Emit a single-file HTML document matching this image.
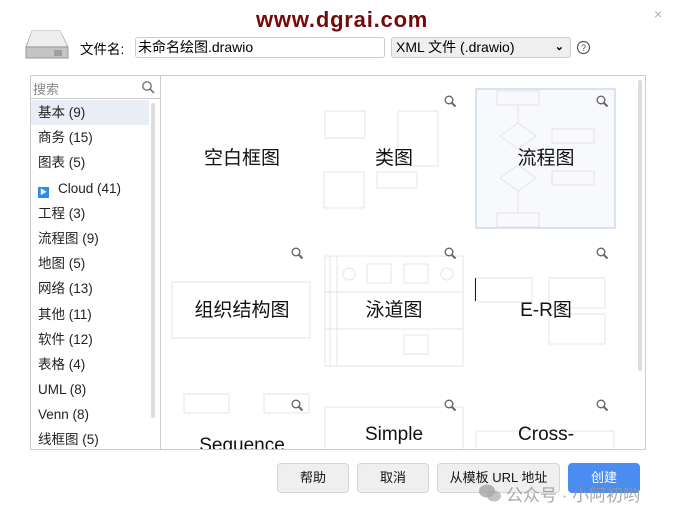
<!DOCTYPE html>
<html><head><meta charset="utf-8"><style>
*{box-sizing:border-box;margin:0;padding:0}
body{width:680px;height:518px;background:#fff;font-family:"Liberation Sans","Noto Sans CJK SC",sans-serif;position:relative;overflow:hidden;color:#000}
.a{position:absolute}
.list div{height:25.2px;line-height:25px;font-size:13.5px;padding-left:7px;color:#222}
.lbl{position:absolute;font-size:19px;color:#111;text-align:center;width:150px;background:transparent}
.btn{position:absolute;top:463px;height:30px;border:1px solid #d6d6d6;border-radius:4px;background:#efefef;font-size:13px;text-align:center;line-height:28px;color:#111}
</style></head><body>
<div class="a" style="left:256px;top:7px;font-size:22px;font-weight:bold;color:#740a0a;letter-spacing:0.8px">www.dgrai.com</div>
<div class="a" style="left:654px;top:6px;font-size:14px;color:#aaa">×</div>
<svg class="a" style="left:24px;top:30px" width="48" height="30"><path d="M8 1h28l8 16v11H2V17z" fill="#ddd" stroke="#aaa"/><path d="M2 17h42v11H2z" fill="#c4c4c4" stroke="#999"/><path d="M8 1h28l7 15H3z" fill="#eee"/><g stroke="#777"><path d="M31 20v6M33 20v6M35 20v6M37 20v6"/></g></svg>
<div class="a" style="left:80px;top:38px;font-size:13.5px">文件名:</div>
<div class="a" style="left:135px;top:37px;width:250px;height:21px;border:1px solid #ccc;border-radius:3px;font-size:14px;line-height:19px;padding-left:2px">未命名绘图.drawio</div>
<div class="a" style="left:391px;top:37px;width:180px;height:21px;border:1px solid #ccc;border-radius:3px;background:#efefef;font-size:14px;line-height:19px;padding-left:4px">XML 文件 (.drawio)<span style="position:absolute;right:6px;top:0;font-size:11px;font-weight:bold">⌄</span></div>
<svg class="a" style="left:576px;top:40px" width="15" height="15"><circle cx="7.5" cy="7.5" r="6" fill="none" stroke="#555" stroke-width="1.2"/><text x="7.5" y="11" font-size="9" text-anchor="middle" fill="#555" font-family="Liberation Sans">?</text></svg>
<div class="a" style="left:30px;top:75px;width:131px;height:375px;border:1px solid #ccc"></div>
<div class="a" style="left:30px;top:75px;width:131px;height:24px;border-bottom:1px solid #ccc;font-size:13px;color:#888;padding:4px 3px">搜索</div>
<svg class="a" style="left:141px;top:80px" width="14" height="14"><circle cx="6" cy="6" r="4.2" fill="none" stroke="#777" stroke-width="1.4"/><path d="M9 9l4 4" stroke="#777" stroke-width="1.6"/></svg>
<div class="a" style="left:151px;top:103px;width:4px;height:315px;background:#ddd;border-radius:2px"></div>
<div class="a list" style="left:31px;top:100px;width:118px">
<div style="background:#e9eef6">基本 (9)</div><div>商务 (15)</div><div>图表 (5)</div>
<div><span style="display:inline-block;width:11px;height:11px;background:#2a8ee8;vertical-align:-1px;margin-right:9px;color:#fff;font-size:7px;line-height:11px;text-align:center">▶</span>Cloud (41)</div>
<div>工程 (3)</div><div>流程图 (9)</div><div>地图 (5)</div><div>网络 (13)</div><div>其他 (11)</div><div>软件 (12)</div><div>表格 (4)</div><div>UML (8)</div><div>Venn (8)</div><div>线框图 (5)</div></div>
<div class="a" style="left:160px;top:75px;width:486px;height:375px;border:1px solid #ccc;border-left:none;overflow:hidden">
<div class="a" style="left:478px;top:4px;width:4px;height:291px;background:#ddd;border-radius:2px"></div>
<svg class="a" style="left:0;top:0" width="470" height="375" fill="none" stroke="#e4e4e4">
<rect x="165" y="35" width="40" height="27"/><rect x="238" y="35" width="40" height="55"/><rect x="164" y="96" width="40" height="36"/><rect x="217" y="96" width="40" height="16"/>
<rect x="316" y="13" width="139" height="139" fill="#f7f9fd" stroke="#c5d5ea" stroke-width="1.3"/>
<rect x="337" y="15" width="42" height="14"/><path d="M358 47l18 13-18 13-18-13z"/><path d="M358 89l18 13-18 13-18-13z"/><rect x="392" y="53" width="42" height="14"/><rect x="392" y="95" width="42" height="14"/><rect x="337" y="137" width="42" height="14"/><path d="M358 29v18M358 115v22"/>
<rect x="12" y="206" width="138" height="56"/>
<rect x="165" y="180" width="138" height="110"/><path d="M165 216h138M165 253h138M170 180v110M177 180v110"/><circle cx="189" cy="198" r="6"/><rect x="207" y="188" width="24" height="19"/><rect x="244" y="188" width="24" height="19"/><circle cx="287" cy="198" r="6"/><rect x="244" y="259" width="24" height="19"/>
<rect x="315" y="202" width="57" height="24"/><rect x="389" y="202" width="56" height="30"/><rect x="389" y="238" width="56" height="30"/>
<rect x="24" y="318" width="45" height="19"/><rect x="104" y="318" width="45" height="19"/>
<rect x="165" y="331" width="138" height="50"/><rect x="316" y="355" width="138" height="30"/>
</svg>
<div class="a" style="left:315px;top:202px;width:1px;height:23px;background:#222"></div>
</div>
<div class="lbl" style="left:167px;top:143px">空白框图</div>
<div class="lbl" style="left:319px;top:143px">类图</div>
<div class="lbl" style="left:471px;top:143px">流程图</div>
<div class="lbl" style="left:167px;top:295px">组织结构图</div>
<div class="lbl" style="left:319px;top:295px">泳道图</div>
<div class="lbl" style="left:471px;top:295px">E-R图</div>
<div class="lbl" style="left:167px;top:435px;height:14px;overflow:hidden">Sequence</div>
<div class="lbl" style="left:319px;top:424px">Simple</div>
<div class="lbl" style="left:471px;top:424px">Cross-</div>
<svg class="a" style="left:0;top:0;pointer-events:none" width="680" height="518">
<g stroke="#666" fill="none" stroke-width="1.4">
<g id="m"><circle cx="449" cy="100" r="3.8"/><path d="M452 103l3.5 3.5" stroke-width="2"/></g>
<use href="#m" x="152"/><use href="#m" x="-153" y="152"/><use href="#m" y="152"/><use href="#m" x="152" y="152"/><use href="#m" x="-153" y="304"/><use href="#m" y="304"/><use href="#m" x="152" y="304"/>
</g></svg>
<div class="btn" style="left:277px;width:72px">帮助</div>
<div class="btn" style="left:357px;width:72px">取消</div>
<div class="btn" style="left:437px;width:123px">从模板 URL 地址</div>
<div class="btn" style="left:568px;width:72px;background:#4a8cf0;border-color:#4a8cf0;color:#fff">创建</div>
<svg class="a" style="left:478px;top:483px" width="24" height="20"><ellipse cx="9" cy="8" rx="8" ry="6.5" fill="#999" opacity="0.7"/><ellipse cx="16" cy="13" rx="7" ry="5.5" fill="#aaa" opacity="0.7"/></svg>
<div class="a" style="left:506px;top:481px;font-size:17px;color:#999;opacity:0.85">公众号 · 小阿初哟</div>
</body></html>
